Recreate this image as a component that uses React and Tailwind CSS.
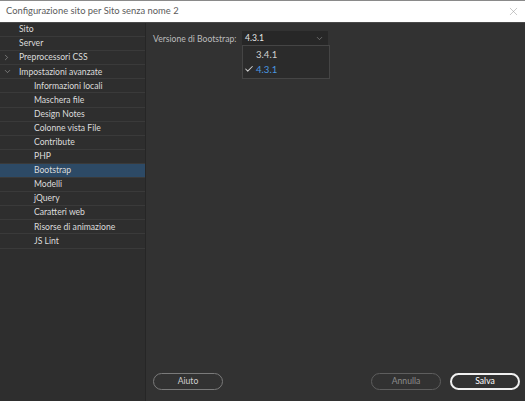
import { Check, ChevronDown, ChevronRight, X } from "lucide-react";

const items = [
    { label: "Sito", level: 0 },
    { label: "Server", level: 0 },
    { label: "Preprocessori CSS", level: 0, arrow: "right" },
    { label: "Impostazioni avanzate", level: 0, arrow: "down" },
    { label: "Informazioni locali", level: 1 },
    { label: "Maschera file", level: 1 },
    { label: "Design Notes", level: 1 },
    { label: "Colonne vista File", level: 1 },
    { label: "Contribute", level: 1 },
    { label: "PHP", level: 1 },
    { label: "Bootstrap", level: 1, selected: true },
    { label: "Modelli", level: 1 },
    { label: "jQuery", level: 1 },
    { label: "Caratteri web", level: 1 },
    { label: "Risorse di animazione", level: 1 },
    { label: "JS Lint", level: 1 },
];

const App = () => {
    return (
        <div
            className="w-[525px] h-[401px] flex flex-col bg-[#323232] text-[8.6px] border-t border-[#8a8a8a] overflow-hidden"
            style={{ fontFamily: 'Lato, "Noto Sans", sans-serif' }}
        >
            {/* Title bar */}
            <div className="h-[21px] bg-white flex items-center justify-between pl-[6px] pr-[5px] shrink-0">
                <span className="text-[9.4px] text-[#5c5c5c]">
                    Configurazione sito per Sito senza nome 2
                </span>
                <X className="w-[13px] h-[13px] text-[#9a9a9a]" strokeWidth={1} />
            </div>

            <div className="flex flex-1 min-h-0 border-t border-[#4a4a4a]">
                {/* Sidebar */}
                <div className="w-[146px] bg-[#2e2e2e] border-r border-[#262626] flex flex-col shrink-0">
                    {items.map((item) => (
                        <div
                            key={item.label}
                            className={`h-[14.1px] flex items-center border-b border-[#3a3a3a] relative text-[#dcdcdc] ${
                                item.selected ? "bg-[#2d4a66]" : ""
                            } ${item.level === 0 ? "pl-[19px]" : "pl-[34px]"}`}
                        >
                            {item.arrow === "right" && (
                                <ChevronRight
                                    className="absolute left-[2px] w-[9px] h-[9px] text-[#aaa]"
                                    strokeWidth={1.5}
                                />
                            )}
                            {item.arrow === "down" && (
                                <ChevronDown
                                    className="absolute left-[3px] w-[9px] h-[9px] text-[#aaa]"
                                    strokeWidth={1.5}
                                />
                            )}
                            <span className="leading-none">{item.label}</span>
                        </div>
                    ))}
                </div>

                {/* Content */}
                <div className="flex-1 flex flex-col justify-between pl-[7px] pr-[5px] pt-[8px] pb-[11px]">
                    <div className="flex items-start">
                        <span className="text-[#bdbdbd] mt-[2px] w-[89px] whitespace-nowrap">
                            Versione di Bootstrap:
                        </span>
                        <div className="relative">
                            <div className="w-[86px] h-[14px] bg-[#272727] flex items-center justify-between pl-[3px] pr-[4px] text-[#e6e6e6]">
                                <span>4.3.1</span>
                                <ChevronDown
                                    className="w-[9px] h-[9px] text-[#9a9a9a]"
                                    strokeWidth={1.5}
                                />
                            </div>
                            {/* Open dropdown */}
                            <div className="absolute left-0 top-[14px] w-[88px] h-[34px] bg-[#2b2b2b] border border-[#454545] flex flex-col justify-center gap-[5px] py-[2px]">
                                <div className="pl-[13px] text-[#d0d0d0] text-[9.6px] leading-none">
                                    3.4.1
                                </div>
                                <div className="flex items-center pl-[1px] text-[#4a98e0] text-[9.6px] leading-none">
                                    <Check
                                        className="w-[10px] h-[10px] text-[#cfcfcf] mr-[2px]"
                                        strokeWidth={2.5}
                                    />
                                    4.3.1
                                </div>
                            </div>
                        </div>
                    </div>

                    {/* Footer buttons */}
                    <div className="flex items-center">
                        <button className="w-[70px] h-[17px] rounded-full border border-[#7a7a7a] text-[#cfcfcf] flex items-center justify-center">
                            Aiuto
                        </button>
                        <div className="flex-1" />
                        <button className="w-[70px] h-[17px] rounded-full border border-[#5e5e5e] text-[#8c8c8c] flex items-center justify-center">
                            Annulla
                        </button>
                        <button className="ml-[9px] w-[70px] h-[17px] rounded-full border-2 border-[#f0f0f0] text-white flex items-center justify-center">
                            Salva
                        </button>
                    </div>
                </div>
            </div>
        </div>
    );
};

export default App;
